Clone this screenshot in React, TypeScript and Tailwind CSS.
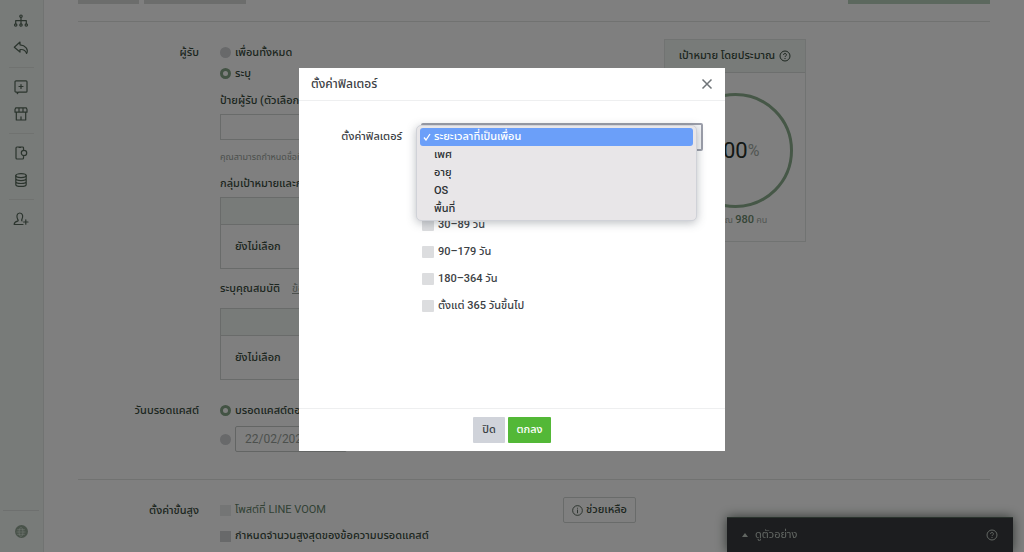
import React, { useState } from 'react';

const filterTypes = ['ระยะเวลาที่เป็นเพื่อน', 'เพศ', 'อายุ', 'OS', 'พื้นที่'];
const durations = ['30–89 วัน', '90–179 วัน', '180–364 วัน', 'ตั้งแต่ 365 วันขึ้นไป'];

const Icon: React.FC<{ children: React.ReactNode }> = ({ children }) => (
  <svg viewBox="0 0 16 16" className="size-4" fill="none" stroke="currentColor" strokeWidth="1.2" strokeLinecap="round" strokeLinejoin="round">
    {children}
  </svg>
);

const HelpIcon: React.FC = () => (
  <svg viewBox="0 0 12 12" className="size-3 shrink-0" fill="none" stroke="currentColor" strokeWidth="1">
    <circle cx="6" cy="6" r="5" />
    <path d="M4.6 4.9a1.4 1.4 0 1 1 2 1.2c-.4.2-.6.4-.6.9M6 8v1" />
  </svg>
);

const SideButton: React.FC<{ label: string; children: React.ReactNode }> = ({ label, children }) => (
  <button type="button" aria-label={label} className="flex h-[27px] items-center justify-center">
    <Icon>{children}</Icon>
  </button>
);

const SideLine: React.FC = () => <div className="mt-[6px] mb-[5px] h-px w-[25px] self-center bg-[#e0e4e1]" />;

const Sidebar: React.FC = () => (
  <nav className="flex h-full w-11 shrink-0 flex-col border-r border-[#e2e6e4] bg-[#f0f6f3] pt-[7px] pr-px text-[#56695a]">
    <SideButton label="ผังงาน">
      <circle cx="8" cy="3.2" r="1.2" />
      <circle cx="2.7" cy="12" r="1.2" />
      <circle cx="8" cy="12" r="1.2" />
      <circle cx="13.3" cy="12" r="1.2" />
      <path d="M8 4.5v6.2M2.7 10.6V7.6h10.6v3" />
    </SideButton>
    <SideButton label="ตอบกลับ">
      <path d="M7 2 1.3 7.2 7 12V9.600c3-.4 5.500.8 6.600 3.900C15.800 9.500 12.500 5.200 7 4.800z" />
    </SideButton>
    <SideLine />
    <SideButton label="ข้อความใหม่">
      <path d="M3 1.800h10a1 1 0 0 1 1 1v9.400a1 1 0 0 1-1 1H5.500L4.300 14.500V13.200H3a1 1 0 0 1-1-1V2.800a1 1 0 0 1 1-1zM8 5.500v4M6 7.500h4" />
    </SideButton>
    <SideButton label="ร้านค้า">
      <path d="M2.800 1.800h10.400l.8 1.600v2.800H2V3.400zM6 2v4M10 2v4M3.300 6.400V14h9.400V6.400M8 14v-3.200" />
    </SideButton>
    <SideLine />
    <SideButton label="มือถือ">
      <path d="M10.500 4.500V3a1 1 0 0 0-1-1H4a1 1 0 0 0-1 1v10a1 1 0 0 0 1 1h5.500a1 1 0 0 0 1-1v-1.500M6 2.300h1.800" />
      <circle cx="11" cy="8" r="2.700" />
    </SideButton>
    <SideButton label="ข้อมูล">
      <ellipse cx="8" cy="3.600" rx="5.200" ry="2" />
      <path d="M2.800 3.600v8.800c0 1.100 2.300 2 5.200 2s5.200-.9 5.200-2V3.600M2.800 6.600c0 1.100 2.300 2 5.200 2s5.200-.9 5.200-2M2.800 9.500c0 1.100 2.300 2 5.200 2s5.200-.9 5.200-2" />
    </SideButton>
    <SideLine />
    <SideButton label="เพิ่มเพื่อน">
      <path d="M10 13.500H1.200c0-2 1-2.700 3.400-3.300.8-.3.700-1 .1-1.800C3.300 5.500 3.700 2 6.800 2s3.500 3.500 2.100 6.400c-.4.700-.4 1.200.1 1.500M12.800 8.800v4.400M10.600 11H15" />
    </SideButton>
    <div className="mt-auto flex h-[42px] w-9 items-center justify-center self-center border-t border-[#dde1de]">
      <button type="button" aria-label="ภาษา" className="flex size-[13px] items-center justify-center rounded-full bg-[#93a695] text-[#d9e5da]">
        <svg viewBox="0 0 12 12" className="size-3" fill="none" stroke="currentColor" strokeWidth="0.7">
          <ellipse cx="6" cy="6" rx="2" ry="4.500" />
          <path d="M1.500 6h9M2.200 3.700h7.600M2.200 8.300h7.600" />
        </svg>
      </button>
    </div>
  </nav>
);

const Radio: React.FC<{ name: string; label?: string; defaultChecked?: boolean; id: string }> = ({ name, label, defaultChecked, id }) => (
  <>
    <input
      id={id}
      type="radio"
      name={name}
      defaultChecked={defaultChecked}
      aria-label={label ? undefined : 'กำหนดเวลา'}
      className="size-[11px] shrink-0 appearance-none rounded-full bg-[#d0d2d5] checked:border-[3px] checked:border-[#86a788] checked:bg-white"
    />
    {label && <label htmlFor={id} className="font-medium whitespace-nowrap">{label}</label>}
  </>
);

const TargetBox: React.FC = () => (
  <div className="h-[72px] border border-[#d3d7d5]">
    <div className="h-[27px] border-b border-[#d3d7d5] bg-[#f0f6f3]" />
    <p className="flex h-11 items-center px-[14px] font-medium">ยังไม่เลือก</p>
  </div>
);

const EstimateCard: React.FC = () => (
  <aside className="mt-[17px] h-[203px] w-[142px] shrink-0 border border-[#e2e6e4]">
    <h2 className="flex h-[33px] items-center justify-center gap-1 border-b border-[#dadedc] bg-[#f0f6f3] font-medium whitespace-nowrap">
      เป้าหมาย โดยประมาณ <HelpIcon />
    </h2>
    <div className="mt-5 flex justify-center">
      <div className="flex size-[115px] items-center justify-center rounded-full border-[3px] border-[#8caf8e]">
        <span className="text-[22px] text-[#26302a]">100</span>
        <span className="text-base text-[#a4ada6]">%</span>
      </div>
    </div>
    <p className="mt-1 text-center text-[9px] leading-4 text-[#a3aca5]">
      ประมาณ <span className="text-[11px] font-medium text-[#6b8a6e]">980</span> คน
    </p>
  </aside>
);

const Label: React.FC<{ children: React.ReactNode }> = ({ children }) => (
  <div className="h-[21px] w-[121px] shrink-0 text-right leading-[21px] font-medium">{children}</div>
);

const FilterModal: React.FC = () => {
  const [selected, setSelected] = useState(filterTypes[0]);

  return (
    <div className="fixed inset-0 flex items-start justify-center bg-black/50 pt-[68px]">
      <div role="dialog" aria-labelledby="modal-title" className="w-[426px] bg-white text-[#3c4145]">
        <header className="flex h-[33px] items-center justify-between border-b border-[#eeeff0] pr-3 pl-[12px]">
          <h2 id="modal-title" className="text-[12px] font-medium">ตั้งค่าฟิลเตอร์</h2>
          <button type="button" aria-label="ปิดหน้าต่าง" className="text-[#6f7478]">
            <svg viewBox="0 0 12 12" className="size-3" stroke="currentColor" strokeWidth="1.500">
              <path d="M1.500 1.500l9 9M10.500 1.500l-9 9" />
            </svg>
          </button>
        </header>

        <div className="flex min-h-[307px] gap-[19px] pt-[22px] pr-[22px]">
          <label htmlFor="filter" className="h-7 w-[103px] shrink-0 text-right leading-7 font-medium">ตั้งค่าฟิลเตอร์</label>
          <div className="flex-1">
            <div className="relative">
              <select
                id="filter"
                value={selected}
                onChange={(e) => setSelected(e.target.value)}
                className="h-7 w-full appearance-none rounded-[2px] border-2 border-[#9c9faa] bg-[#f4f5f7] px-3 text-transparent"
              >
                {filterTypes.map((t) => <option key={t}>{t}</option>)}
              </select>
              <ul role="listbox" className="absolute top-[2px] -left-[5px] w-[281px] rounded-[5px] border border-[#d0d2d8] bg-[#e8e6e8] px-[3px] py-[2px] shadow-[0_2px_10px_rgba(60,70,80,0.35)]">
                {filterTypes.map((t) => (
                  <li key={t} role="option" aria-selected={t === selected}>
                    <button
                      type="button"
                      onClick={() => setSelected(t)}
                      className={`flex h-[18px] w-full items-center rounded-[3px] pl-[3px] text-left font-medium ${t === selected ? 'bg-[#6b9ff9] text-white' : 'text-[#2b3033]'}`}
                    >
                      <span className="w-[11px]">
                        {t === selected && (
                          <svg viewBox="0 0 8 8" className="size-2" fill="none" stroke="currentColor" strokeWidth="1.300">
                            <path d="M1 4.500 3 7l4-6" />
                          </svg>
                        )}
                      </span>
                      {t}
                    </button>
                  </li>
                ))}
              </ul>
            </div>
            <div className="mt-[60px] pl-px">
              {durations.map((d) => (
                <label key={d} className="flex h-[27px] items-center gap-1 font-medium">
                  <input type="checkbox" className="size-3 appearance-none rounded-[1px] bg-[#dcdddf]" />
                  {d}
                </label>
              ))}
            </div>
          </div>
        </div>

        <footer className="flex h-[43px] items-center justify-center gap-[3px] border-t border-[#eeeff0]">
          <button type="button" className="h-[26px] w-8 rounded-[1px] bg-[#d0d3da] font-medium">ปิด</button>
          <button type="button" className="h-[26px] w-[43px] rounded-[1px] bg-[#53b837] font-medium text-white">ตกลง</button>
        </footer>
      </div>
    </div>
  );
};

export default function App() {
  return (
    <div className="flex h-screen overflow-hidden bg-white font-[Roboto,'Noto_Sans_Thai','Noto_Sans',sans-serif] text-[11px] leading-[18px] text-[#3a4d3e]">
      <Sidebar />

      <main className="min-w-0 flex-1 px-[34px]">
        <div className="flex h-[22px] items-start gap-[5px] border-b border-[#e2e4e3]">
          <div className="h-1 w-[61px] bg-[#d8dbd9]" />
          <div className="h-1 w-[102px] bg-[#d8dbd9]" />
          <div className="ml-auto h-1 w-[142px] bg-[#b9d0bc]" />
        </div>

        <div className="flex gap-[27px]">
          <div className="w-[559px] pt-5">
            <section className="flex gap-[21px]">
              <Label>ผู้รับ</Label>
              <div className="flex-1">
                <div className="flex h-[21px] items-center gap-1"><Radio id="all" name="target" label="เพื่อนทั้งหมด" /></div>
                <div className="flex h-[21px] items-center gap-1"><Radio id="some" name="target" label="ระบุ" defaultChecked /></div>
                <label htmlFor="tag" className="mt-[7px] block h-5 leading-5 font-medium">ป้ายผู้รับ (ตัวเลือก)</label>
                <input id="tag" type="text" className="mt-[3px] block h-[26px] w-full border border-[#d3d7d5] bg-transparent px-2" />
                <p className="mt-2 h-[18px] text-[9px] leading-[18px] text-[#98a19a]">คุณสามารถกำหนดชื่อที่</p>
                <h3 className="mt-2 h-5 leading-5 font-medium">กลุ่มเป้าหมายและการ</h3>
                <div className="mt-[3px]"><TargetBox /></div>
                <h3 className="mt-[10px] flex h-5 gap-3 leading-5 font-medium">
                  ระบุคุณสมบัติ
                  <a href="#audience" className="font-normal text-[#98a19a] underline">ข้อมูล</a>
                </h3>
                <div className="mt-[9px]"><TargetBox /></div>
              </div>
            </section>

            <section className="mt-5 flex gap-[21px]">
              <Label>วันบรอดแคสต์</Label>
              <div className="flex-1">
                <div className="flex h-[21px] items-center gap-1"><Radio id="now" name="date" label="บรอดแคสต์ตอนนี้" defaultChecked /></div>
                <div className="mt-[5px] flex items-center gap-1">
                  <Radio id="later" name="date" />
                  <input type="text" aria-label="วันที่" defaultValue="22/02/2023" className="h-[26px] w-28 rounded-[2px] border border-[#c6cac8] bg-transparent px-[9px] text-[12px] text-[#98a19a]" />
                </div>
              </div>
            </section>
          </div>
          <EstimateCard />
        </div>

        <section className="mt-[27px] flex gap-[21px] border-t border-[#e2e4e3] pt-5">
          <Label>ตั้งค่าขั้นสูง</Label>
          <div className="w-[322px] space-y-[6px]">
            <label className="flex h-5 items-center gap-1 text-[#64836a]">
              <input type="checkbox" disabled className="size-[11px] appearance-none bg-[#e9ebea]" />
              โพสต์ที่ LINE VOOM
            </label>
            <label className="flex h-5 items-center gap-1 font-medium">
              <input type="checkbox" className="size-[11px] appearance-none bg-[#d0d2d5]" />
              กำหนดจำนวนสูงสุดของข้อความบรอดแคสต์
            </label>
          </div>
          <button type="button" className="-mt-[3px] flex h-[26px] w-[73px] items-center justify-center gap-[3px] rounded-[2px] border border-[#d3d7d5] font-medium whitespace-nowrap">
            <svg viewBox="0 0 12 12" className="size-[11px]" fill="none" stroke="currentColor" strokeWidth="0.900">
              <circle cx="6" cy="6" r="5.300" />
              <path d="M6 5v4M6 3v1" />
            </svg>
            ช่วยเหลือ
          </button>
        </section>
      </main>

      <div className="fixed right-[11px] bottom-0 flex h-[35px] w-[286px] items-center border-t border-[#55665a] bg-[#393a3e] pr-[15px] pl-[14px] text-[#c3cdc5] shadow-[0_0_12px_rgba(30,45,35,0.7)]">
        <button type="button" className="flex flex-1 items-center gap-[6px]">
          <svg viewBox="0 0 8 8" className="size-2" fill="currentColor"><path d="M1 6l3-4 3 4z" /></svg>
          ดูตัวอย่าง
        </button>
        <HelpIcon />
      </div>

      <FilterModal />
    </div>
  );
}
